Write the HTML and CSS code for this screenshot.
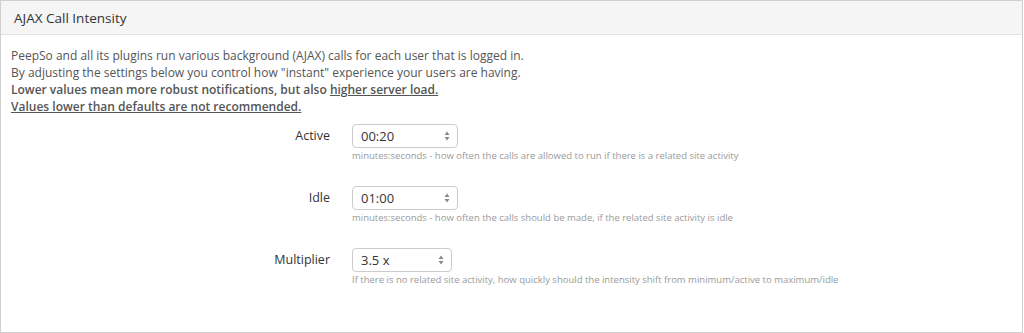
FILE: index.html
```html
<!DOCTYPE html>
<html lang="en">
<head>
    <meta charset="UTF-8">
    <meta name="viewport" content="width=device-width, initial-scale=1.0">
    <title>AJAX Call Intensity</title>
    <link rel="stylesheet" href="styles.css">
</head>
<body>

<div class="panel">
    <div class="panel-heading">AJAX Call Intensity</div>

    <div class="panel-body">
        <div class="intro">
            PeepSo and all its plugins run various background (AJAX) calls for each user that is logged in.<br>
            By adjusting the settings below you control how "instant" experience your users are having.<br>
            <b>Lower values mean more robust notifications, but also <u>higher server load.</u></b><br>
            <b><u>Values lower than defaults are not recommended.</u></b>
        </div>

        <div class="form-row">
            <label class="form-label">Active</label>
            <div class="form-field">
                <div class="select">
                    <span>00:20</span>
                    <svg class="caret" width="6" height="10" viewBox="0 0 6 10"><path d="M3 0.5 L5.5 4 H0.5 Z M3 9.5 L5.5 6 H0.5 Z" fill="#8a8a8a"/></svg>
                </div>
                <div class="hint">minutes:seconds - how often the calls are allowed to run if there is a related site activity</div>
            </div>
        </div>

        <div class="form-row">
            <label class="form-label">Idle</label>
            <div class="form-field">
                <div class="select">
                    <span>01:00</span>
                    <svg class="caret" width="6" height="10" viewBox="0 0 6 10"><path d="M3 0.5 L5.5 4 H0.5 Z M3 9.5 L5.5 6 H0.5 Z" fill="#8a8a8a"/></svg>
                </div>
                <div class="hint">minutes:seconds - how often the calls should be made, if the related site activity is idle</div>
            </div>
        </div>

        <div class="form-row">
            <label class="form-label">Multiplier</label>
            <div class="form-field">
                <div class="select narrow">
                    <span>3.5 x</span>
                    <svg class="caret" width="6" height="10" viewBox="0 0 6 10"><path d="M3 0.5 L5.5 4 H0.5 Z M3 9.5 L5.5 6 H0.5 Z" fill="#8a8a8a"/></svg>
                </div>
                <div class="hint">If there is no related site activity, how quickly should the intensity shift from minimum/active to maximum/idle</div>
            </div>
        </div>
    </div>
</div>

</body>
</html>
```

FILE: styles.css
```css
body {
    font-family: 'Open Sans', sans-serif;
    margin: 0;
    background-color: #ffffff;
    color: #555;
}
.panel {
    width: 1023px;
    height: 333px;
    box-sizing: border-box;
    border: 1px solid #cfcfcf;
    background-color: #fff;
}
.panel-heading {
    height: 34px;
    box-sizing: border-box;
    padding: 8px 13px;
    background-color: #f5f5f5;
    border-bottom: 1px solid #e3e3e3;
    font-size: 13.5px;
    line-height: 18px;
    color: #333;
}
.panel-body {
    padding: 12px 10px 0;
}
.intro {
    font-size: 12px;
    line-height: 17px;
    color: #555;
}
.intro b {
    font-weight: 600;
}
.form-row {
    display: grid;
    grid-template-columns: 319px 1fr;
    column-gap: 22px;
    margin-top: 9px;
    margin-bottom: 24px;
}
.form-row + .form-row {
    margin-top: 0;
}
.form-label {
    text-align: right;
    font-size: 12.5px;
    line-height: 24px;
    color: #333;
}
.select {
    width: 106px;
    height: 24px;
    box-sizing: border-box;
    border: 1px solid #cccccc;
    border-radius: 4px;
    display: flex;
    align-items: center;
    justify-content: space-between;
    padding: 0 7px 0 8px;
    font-size: 13px;
    color: #333;
    background-color: #fff;
}
.select.narrow {
    width: 100px;
}
.hint {
    margin-top: 2px;
    font-size: 9.5px;
    line-height: 12px;
    color: #9a9a9a;
}
```
